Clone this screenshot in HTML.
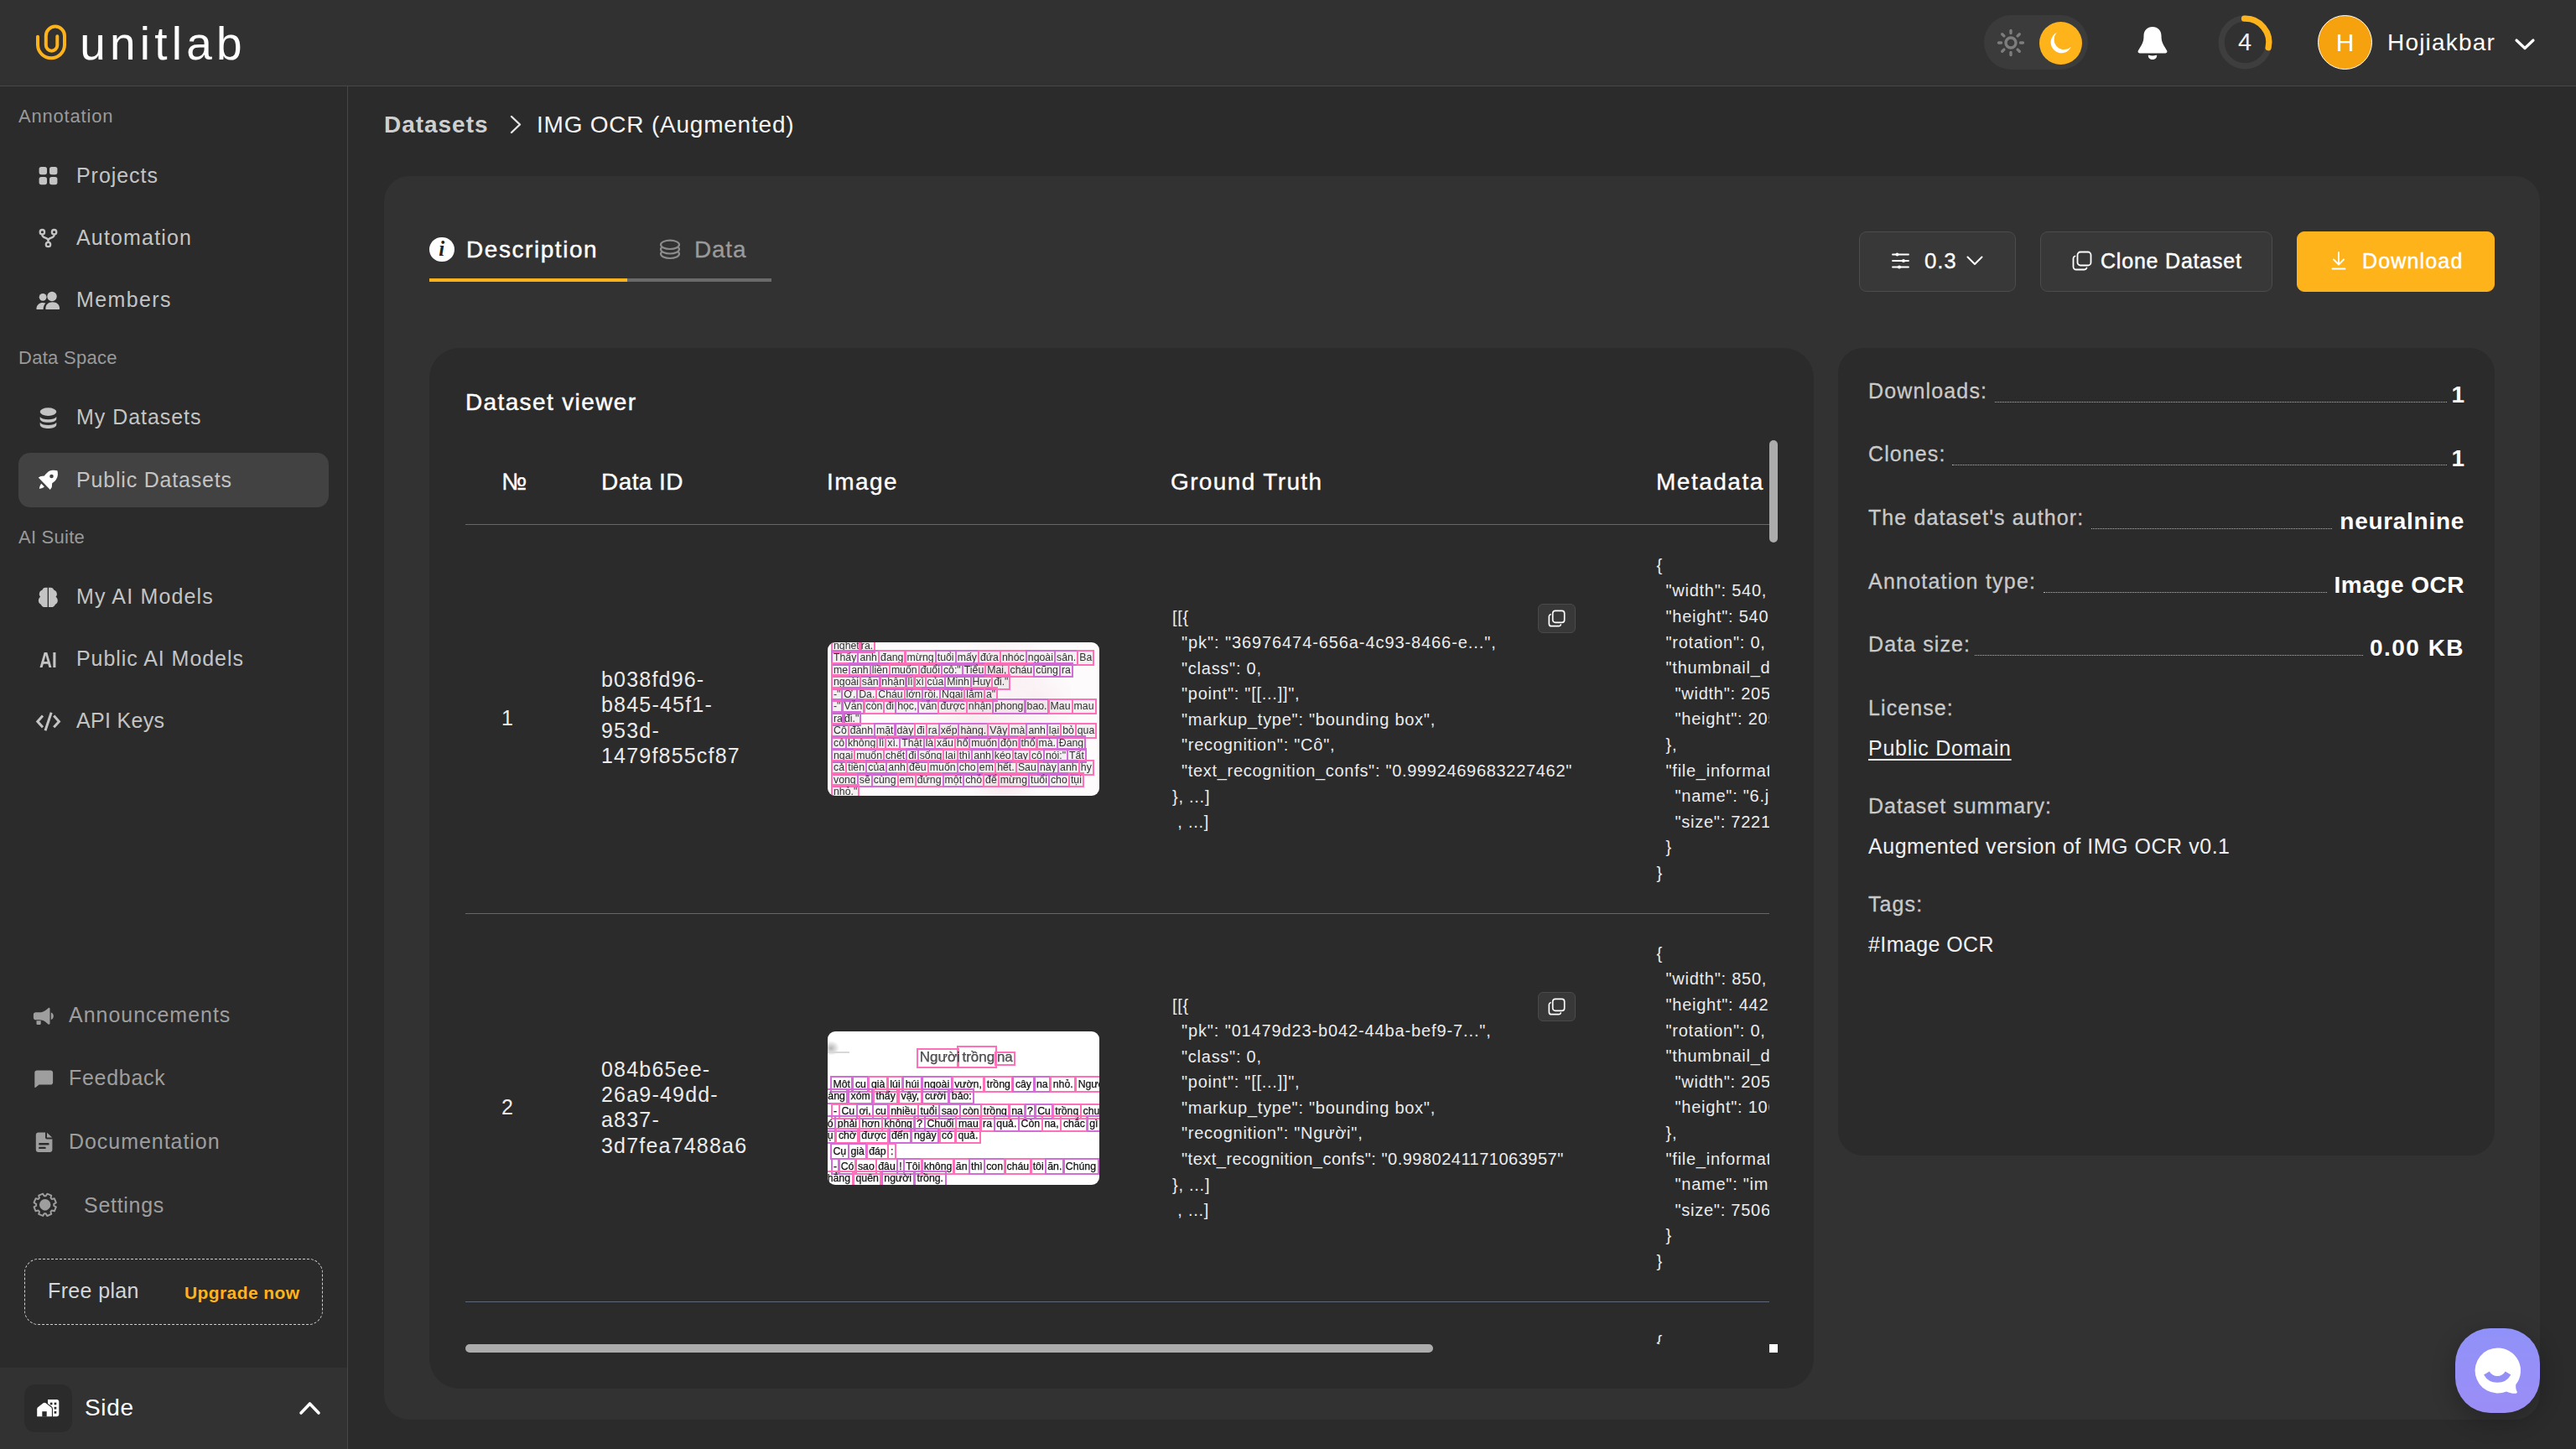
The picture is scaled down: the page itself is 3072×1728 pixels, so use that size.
<!DOCTYPE html>
<html lang="en">
<head>
<meta charset="utf-8">
<title>Unitlab – IMG OCR (Augmented)</title>
<style>
*{box-sizing:border-box;margin:0;padding:0}
html,body{width:3072px;height:1728px;overflow:hidden;background:#2b2b2b}
body{font-family:"Liberation Sans",sans-serif;color:#fff;position:relative;-webkit-font-smoothing:antialiased}
.abs{position:absolute}
.t{position:absolute;white-space:pre;line-height:1}
.md{-webkit-text-stroke:.45px currentColor}
.md2{-webkit-text-stroke:.3px currentColor}
svg{display:block;position:absolute;overflow:visible}

/* header */
#hdr{position:absolute;left:0;top:0;width:3072px;height:103px;background:#313131;border-bottom:1px solid #474747}
#logo-t{left:95.300px;top:25px;font-size:55px;letter-spacing:5.200px;color:#fff}
#pill{position:absolute;left:2366px;top:18px;width:124px;height:65px;border-radius:33px;background:#3b3b3b}
#moon{position:absolute;left:2432px;top:25.500px;width:51px;height:51px;border-radius:50%;background:#ffb31a}
#avatar{position:absolute;left:2764px;top:18px;width:65px;height:65px;border-radius:50%;background:#f6a10e;border:1px solid #fff}
#av-h{left:2764px;width:65px;text-align:center;top:36px;font-size:30px;color:#fff}
#uname{left:2847px;top:37px;font-size:28px;letter-spacing:1.2px;color:#fff}
#n4{left:2647px;width:60px;text-align:center;top:36px;font-size:29px;color:#f2f2f2}

/* sidebar */
#side{position:absolute;left:0;top:103px;width:415px;height:1625px;background:#2b2b2b;border-right:1px solid #474747}
.lbl{font-size:22px;color:#9a9a9a;left:22px}
.it{font-size:25px;color:#c4c4c4;left:91px}
.it2{font-size:25px;color:#9e9e9e;left:82px}
#active{position:absolute;left:22px;top:540px;width:370px;height:65px;border-radius:14px;background:#424242}
#plan{position:absolute;left:29px;top:1501px;width:356px;height:79px;border:1.5px dashed #cfcfcf;border-radius:17px}
#sbot{position:absolute;left:0;top:1631px;width:414px;height:97px;background:#323232}
#sbox{position:absolute;left:29px;top:1651px;width:57px;height:57px;border-radius:13px;background:#2b2b2b}
</style>
</head>
<body>

<!-- ================= HEADER ================= -->
<div id="hdr"></div>
<svg style="left:40px;top:27px" width="44" height="48" viewBox="40 27 44 48" fill="none" stroke="#ffb31a" stroke-width="4" stroke-linecap="round">
  <path d="M45 43.700V53.300a16 16 0 0 0 32 0V42.700a11.100 11.100 0 0 0-22.200 0V53.900a6.750 6.750 0 0 0 13.500 0V43.200"/>
</svg>
<div class="t" id="logo-t">unitlab</div>

<div id="pill"></div>
<svg style="left:2382px;top:35px" width="32" height="32" viewBox="-16 -16 32 32" fill="none" stroke="#7d7d7d" stroke-width="3.400" stroke-linecap="round">
  <circle r="6"/>
  <path d="M0-11.5V-14.5M0 11.5V14.5M-11.5 0H-14.5M11.5 0H14.5M-8.1-8.1L-10.3-10.3M8.1 8.1L10.3 10.3M8.1-8.1L10.3-10.3M-8.1 8.1L-10.3 10.3"/>
</svg>
<div id="moon"></div>
<svg style="left:2444px;top:38px" width="28" height="28" viewBox="0 0 28 28">
  <path d="M9 .8A12.800 12.800 0 1 0 26.100 17.500A11.500 11.500 0 0 1 9 .8Z" fill="#fff"/>
</svg>
<!-- bell -->
<svg style="left:2548px;top:31px" width="38" height="41" viewBox="0 0 38 41" fill="#fff">
  <path d="M19 1C12.800 1 8.500 5.300 8.500 11.500C8.500 15.500 8 19 6 22.500L1.800 29.600C1.100 30.900 2 32.400 3.500 32.400H34.500C36 32.400 36.900 30.900 36.200 29.600L32 22.500C30 19 29.500 15.500 29.500 11.500C29.500 5.300 25.200 1 19 1Z"/>
  <path d="M13.800 35.300C13.800 34.900 14.200 34.700 14.600 34.800C17.500 35.600 20.500 35.600 23.400 34.800C23.800 34.700 24.200 34.900 24.200 35.300C24.200 38 21.900 40.100 19 40.100C16.100 40.100 13.800 38 13.800 35.300Z"/>
</svg>
<!-- progress ring -->
<svg style="left:2645px;top:18px" width="65" height="65" viewBox="-32.500 -32.500 65 65" fill="none" stroke-width="7.300">
  <circle r="28.300" stroke="#3e3e3e"/>
  <path d="M-1 -28.300A28.300 28.300 0 0 1 27.600 6.300" stroke="#ffb31a" stroke-linecap="round"/>
</svg>
<div class="t" id="n4">4</div>
<div id="avatar"></div>
<div class="t" id="av-h">H</div>
<div class="t" id="uname">Hojiakbar</div>
<svg style="left:2999px;top:46px" width="24" height="14" viewBox="0 0 24 14" fill="none" stroke="#fff" stroke-width="3.200" stroke-linecap="round" stroke-linejoin="round"><path d="M2 2L12 11.500L22 2"/></svg>

<!-- ================= SIDEBAR ================= -->
<div id="side"></div>
<div class="t lbl" style="top:128px;letter-spacing:.8px">Annotation</div>
<div class="t it" style="top:197px;letter-spacing:.94px">Projects</div>
<div class="t it" style="top:271px;letter-spacing:1.17px">Automation</div>
<div class="t it" style="top:345px;letter-spacing:1.37px">Members</div>
<div class="t lbl" style="top:416px;letter-spacing:.28px">Data Space</div>
<div class="t it" style="top:485px;letter-spacing:.96px">My Datasets</div>
<div id="active"></div>
<div class="t it" style="top:560px;letter-spacing:.81px">Public Datasets</div>
<div class="t lbl" style="top:630px;letter-spacing:.24px">AI Suite</div>
<div class="t it" style="top:699px;letter-spacing:1.16px">My AI Models</div>
<div class="t it" style="top:773px;letter-spacing:.94px">Public AI Models</div>
<div class="t it" style="top:847px;letter-spacing:.31px">API Keys</div>

<div class="t it2" style="top:1198px;letter-spacing:.97px">Announcements</div>
<div class="t it2" style="top:1273px;letter-spacing:.71px">Feedback</div>
<div class="t it2" style="top:1349px;letter-spacing:.95px">Documentation</div>
<div class="t it2" style="top:1425px;left:100px;letter-spacing:.72px">Settings</div>

<div id="plan"></div>
<div class="t" style="left:57px;top:1527px;font-size:25px;letter-spacing:.36px;color:#d6d6d6">Free plan</div>
<div class="t" style="left:220px;top:1531px;font-size:21px;font-weight:700;letter-spacing:.4px;color:#ffb31a">Upgrade now</div>
<div id="sbot"></div>
<div id="sbox"></div>
<div class="t" style="left:101px;top:1665px;font-size:28px;letter-spacing:.65px;color:#fff">Side</div>
<svg style="left:356px;top:1670px" width="27" height="18" viewBox="0 0 27 18" fill="none" stroke="#fff" stroke-width="3.600" stroke-linecap="round" stroke-linejoin="round"><path d="M3 15L13.500 4L24 15"/></svg>


<!-- sidebar icons -->
<svg style="left:0;top:0" width="415" height="1728" viewBox="0 0 415 1728">
 <g fill="#c4c4c4">
  <!-- projects -->
  <rect x="46.6" y="198.9" width="9.4" height="9.3" rx="2.6"/><rect x="59" y="198.9" width="9.4" height="9.3" rx="2.6"/>
  <rect x="46.6" y="210.9" width="9.4" height="9.3" rx="2.6"/><rect x="59" y="210.9" width="9.4" height="9.3" rx="2.6"/>
  <!-- members -->
  <circle cx="51.1" cy="354.3" r="4.4"/><circle cx="62" cy="353.5" r="5.7"/>
  <path d="M55.300 369c-.6 0-1-.5-1-1.100.3-4.900 3.600-7.600 8.400-7.600s8.100 2.700 8.400 7.600c0 .6-.4 1.100-1 1.100Z"/>
  <path d="M44.300 369c-.6 0-1-.5-.9-1.100.4-4.300 3.400-7 7.800-7 1.200 0 2.300.2 3.200.6-1.800 1.700-2.700 4.200-2.800 7.500Z"/>
  <!-- my datasets -->
  <ellipse cx="57.5" cy="491.1" rx="9.8" ry="4.8"/>
  <path d="M47.700 497c1.500 2.200 5.200 3.300 9.800 3.300s8.300-1.100 9.800-3.300v2.400c0 2.600-4.400 4.400-9.800 4.400s-9.800-1.800-9.800-4.400Z"/>
  <path d="M47.700 503.700c1.500 2.200 5.200 3.300 9.800 3.300s8.300-1.100 9.800-3.300v2.900c0 2.600-4.400 4.400-9.800 4.400s-9.800-1.800-9.800-4.400Z"/>
  <!-- brain -->
  <path d="M56.70 700.80H54.20C52.30 700.80 50.90 702 50.50 703.60C48.40 704.20 46.80 706.20 46.80 708.60C46.80 709.80 47.30 710.90 48.20 711.80C46.80 712.80 45.90 714.40 45.90 716.20C45.90 718.20 47 719.90 48.70 720.70C49.40 722.70 51.40 724.10 53.60 724.10H56.70Z"/>
  <path d="M58.00 700.80 H60.50 C62.40 700.80 63.80 702.00 64.20 703.60 C66.30 704.20 67.90 706.20 67.90 708.60 C67.90 709.80 67.40 710.90 66.50 711.80 C67.90 712.80 68.80 714.40 68.80 716.20 C68.80 718.20 67.70 719.90 66.00 720.70 C65.30 722.70 63.30 724.10 61.10 724.10 H58.00 Z"/>
 </g>
 <!-- automation -->
 <g fill="none" stroke="#c4c4c4" stroke-width="2.3">
  <circle cx="50.4" cy="276.7" r="2.7"/><circle cx="64.6" cy="276.7" r="2.7"/><circle cx="57.5" cy="291.5" r="2.7"/>
  <path d="M50.400 279.500v.8c0 4.200 7.100 2.600 7.100 6.600v2M64.600 279.500v.8c0 4.200-7.100 2.600-7.100 6.6"/>
 </g>
 <!-- rocket (active, white) -->
 <g fill="#fff">
  <path d="M57.900 562.200C61 560.600 65.500 560.500 68.400 561.300C69.300 564.500 69.200 568.500 67.100 571.500C65.800 573.500 64 575 62.200 576.300L61.800 581L59.800 584L45.800 569.400L48.500 567.900L52.900 567.500C54.300 565.600 56 563.600 57.900 562.200Z"/>
  <path d="M49.200 576.800L52.900 580.600C51 582 48.800 582.800 46.900 582.900C47 580.800 47.900 578.500 49.200 576.800Z"/>
  <circle cx="61.500" cy="568" r="2.300" fill="#424242"/>
 </g>
 <!-- api keys -->
 <g fill="none" stroke="#c4c4c4" stroke-width="3" stroke-linejoin="miter">
  <path d="M51 853.500L44.800 860.400L51 867.300M64.200 853.500L70.400 860.400L64.200 867.300M61.200 849.800L54 871.2"/>
 </g>
 <g fill="#9e9e9e">
  <!-- announcements -->
  <path d="M58.300 1201.800c.7 0 1.200.5 1.200 1.200v17.500c0 .7-.5 1.200-1.200 1.200-.3 0-.6-.1-.8-.3l-2.300-2c-2.300-2-5.200-3.100-8.300-3.100h-4.400c-1.400 0-2.600-1.200-2.600-2.600v-3.800c0-1.400 1.200-2.600 2.600-2.600h4.400c3.100 0 6-1.100 8.300-3.100l2.300-2c.2-.2.500-.4.800-.4Z"/>
  <path d="M43.500 1217.200h5.200v3.600c0 .7-.6 1.300-1.300 1.300h-2.600c-.7 0-1.300-.6-1.300-1.300Z"/>
  <path d="M60.800 1207.600c1.800.4 3 2.100 3 4.200s-1.200 3.800-3 4.200Z"/>
  <!-- feedback -->
  <path d="M43.900 1276.600h16.600c1.400 0 2.600 1.200 2.600 2.600v11.700c0 1.400-1.200 2.600-2.600 2.600H46.600l-4.300 3.500c-.4.300-1 0-1-.5v-17.300c0-1.400 1.200-2.600 2.600-2.600Z"/>
  <!-- documentation -->
  <path d="M45.800 1350.500h8.200v6c0 1.100.9 2 2 2h6.400v12.500c0 1.700-1.300 3-3 3H45.800c-1.700 0-3-1.300-3-3v-17.500c0-1.700 1.300-3 3-3Z"/>
  <path d="M56 1350.700l6.200 5.800H56Z"/>
 </g>
 <g fill="none" stroke="#2b2b2b" stroke-width="2.4" stroke-linecap="round"><path d="M47.300 1364.300H57.500M47.300 1368.900H53.5"/></g>
 <!-- settings -->
 <g transform="translate(53.700 1436.800) rotate(22.500)">
  <path d="M10.130 -3.130 L13.130 -2.660 L13.130 2.660 L10.130 3.130 L9.380 4.950 L11.170 7.400 L7.400 11.170 L4.950 9.380 L3.130 10.130 L2.660 13.130 L-2.660 13.130 L-3.130 10.130 L-4.950 9.380 L-7.400 11.170 L-11.170 7.400 L-9.380 4.950 L-10.130 3.130 L-13.130 2.660 L-13.130 -2.660 L-10.130 -3.130 L-9.380 -4.950 L-11.170 -7.400 L-7.400 -11.170 L-4.950 -9.380 L-3.130 -10.130 L-2.660 -13.130 L2.660 -13.130 L3.130 -10.130 L4.950 -9.380 L7.400 -11.170 L11.170 -7.400 L9.380 -4.950Z" fill="none" stroke="#9e9e9e" stroke-width="2" stroke-linejoin="round"/>
  <circle r="6.7" fill="#9e9e9e"/>
 </g>
 <!-- side: house + building -->
 <g fill="#fff">
  <path d="M57 1669h10.800c1.400 0 2.500 1.100 2.500 2.500v15.300c0 1.400-1.100 2.500-2.500 2.500H57Z"/>
  <path d="M44.200 1689.300v-9.100c0-.8.400-1.500 1-2l6.300-4.900c.9-.7 2.200-.7 3.100 0l6.300 4.900c.6.500 1 1.200 1 2v9.100Z" stroke="#2b2b2b" stroke-width="2.2" paint-order="stroke"/>
 </g>
 <g fill="#2b2b2b">
  <rect x="50.3" y="1683.2" width="5.4" height="6.3"/>
  <rect x="64.6" y="1672.6" width="2.7" height="2.7"/><rect x="64.6" y="1677.8" width="2.7" height="2.7"/><rect x="64.6" y="1683" width="2.7" height="2.7"/>
  <rect x="59.8" y="1672.6" width="2.7" height="2.7"/>
 </g>
</svg>
<div class="t" style="left:46.600px;top:774px;font-size:26px;font-weight:700;color:#c4c4c4;transform:scaleX(.8);transform-origin:0 0">AI</div>



<!-- ================= MAIN ================= -->
<style>
#card{position:absolute;left:458px;top:210px;width:2571px;height:1483px;border-radius:30px;background:#323232}
#viewer{position:absolute;left:512px;top:415px;width:1651px;height:1241px;border-radius:36px;background:#2b2b2b}
#info{position:absolute;left:2192px;top:415px;width:783px;height:963px;border-radius:30px;background:#2b2b2b}
.btn{position:absolute;top:276px;height:72px;border-radius:9px;background:#383838;border:1px solid #4c4c4c}
.th{font-size:28px;color:#fff;top:561px;-webkit-text-stroke:.35px #fff}
.hl{position:absolute;left:555px;width:1555px;height:1px;background:#5f6878}
.did{position:absolute;left:717px;font-size:25px;line-height:30.400px;color:#ececec;white-space:pre;letter-spacing:1.200px}
.js{position:absolute;font-size:20px;line-height:30.600px;color:#ececec;white-space:pre;letter-spacing:.74px}
.js i{display:inline-block;width:11px}
.num{font-size:25px;color:#ececec;left:598px}
.cp{position:absolute;left:1834px;width:45px;height:35px;border-radius:6px;background:#383838;border:1px solid #4a4a4a}
.il{font-size:25px;color:#c9c9c9;left:2228px;-webkit-text-stroke:.3px #c9c9c9}
.iv{font-size:28px;font-weight:700;color:#fff;right:133px}
.ib{font-size:25px;color:#f0f0f0;left:2228px}
.dots{position:absolute;height:0;border-top:1px dotted #b4b4b4}
.thumb{position:absolute;left:987px;width:324px;height:183px;border-radius:9px;background:#fdfbfc;overflow:hidden;color:#303030}
</style>
<div id="card"></div>

<!-- breadcrumb -->
<div class="t" style="left:458px;top:135px;font-size:28px;font-weight:700;letter-spacing:.97px;color:#cfcfcf">Datasets</div>
<svg style="left:608px;top:137px" width="14" height="23" viewBox="0 0 14 23" fill="none" stroke="#e6e6e6" stroke-width="2.400" stroke-linecap="round" stroke-linejoin="round"><path d="M2 2L12 11.500L2 21"/></svg>
<div class="t" style="left:640px;top:135px;font-size:28px;letter-spacing:.78px;color:#f4f4f4">IMG OCR (Augmented)</div>

<!-- tabs -->
<div class="abs" style="left:512px;top:282.500px;width:29.500px;height:29.500px;border-radius:50%;background:#fff"></div>
<div class="t" style="left:512px;width:29.500px;text-align:center;top:284px;font-family:'Liberation Serif',serif;font-style:italic;font-weight:700;font-size:25px;color:#222">i</div>
<div class="t md" style="left:556px;top:284px;font-size:28px;letter-spacing:1.560px;color:#fff">Description</div>
<div class="abs" style="left:512px;top:332px;width:236px;height:4px;background:#ffb31a"></div>
<div class="abs" style="left:748px;top:332px;width:172px;height:4px;background:#6a6a6a"></div>
<svg style="left:786px;top:285px" width="26" height="25" viewBox="0 0 26 25" fill="#323232" stroke="#8c8c8c" stroke-width="2.200">
  <ellipse cx="13" cy="17.800" rx="11" ry="5.200"/><ellipse cx="13" cy="12.300" rx="11" ry="5.200"/><ellipse cx="13" cy="6.800" rx="11" ry="5.200"/>
</svg>
<div class="t md2" style="left:828px;top:284px;font-size:28px;letter-spacing:.78px;color:#9a9a9a">Data</div>

<!-- buttons -->
<div class="btn" style="left:2217px;width:187px"></div>
<svg style="left:2256px;top:300px" width="21" height="22" viewBox="0 0 21 22" fill="none" stroke="#fff" stroke-width="1.800" stroke-linecap="round">
  <path d="M1 3.500H20M1 11H20M1 18.500H20"/>
  <circle cx="6.500" cy="3.500" r="2" fill="#fff" stroke="none"/><circle cx="14" cy="11" r="2" fill="#fff" stroke="none"/><circle cx="9" cy="18.500" r="2" fill="#fff" stroke="none"/>
</svg>
<div class="t md2" style="left:2295px;top:298px;font-size:26px;letter-spacing:.8px;color:#fff">0.3</div>
<svg style="left:2345px;top:305px" width="20" height="12" viewBox="0 0 20 12" fill="none" stroke="#fff" stroke-width="2" stroke-linecap="round" stroke-linejoin="round"><path d="M1.500 1.500L10 10L18.500 1.500"/></svg>

<div class="btn" style="left:2433px;width:277px"></div>
<svg style="left:2471px;top:299px" width="24" height="24" viewBox="0 0 24 24" fill="none" stroke="#fff" stroke-width="1.800" stroke-linejoin="round">
  <rect x="6.500" y="1.500" width="16" height="16" rx="3.500"/>
  <path d="M3.500 6.500c-1.200.4-2 1.500-2 2.800v9.700c0 2 1.600 3.500 3.500 3.500h9.700c1.300 0 2.400-.8 2.800-2" stroke-linecap="round"/>
</svg>
<div class="t md" style="left:2505px;top:299px;font-size:25px;letter-spacing:.8px;color:#fff">Clone Dataset</div>

<div class="btn" style="left:2739px;width:236px;background:#ffb31a;border-color:#ffb31a"></div>
<svg style="left:2780px;top:300px" width="18" height="22" viewBox="0 0 18 22" fill="none" stroke="#fff" stroke-width="1.800" stroke-linecap="round" stroke-linejoin="round">
  <path d="M9 1V15.500M3 9.500L9 15.500L15 9.500M1.500 20.500H16.500"/>
</svg>
<div class="t md" style="left:2817px;top:299px;font-size:25px;letter-spacing:1.160px;color:#fff">Download</div>

<!-- dataset viewer -->
<div id="viewer"></div>
<div class="t md" style="left:555px;top:466px;font-size:28px;letter-spacing:1.370px;color:#fff">Dataset viewer</div>

<div class="t th" style="left:598px;letter-spacing:1px">№</div>
<div class="t th" style="left:717px;letter-spacing:.43px">Data ID</div>
<div class="t th" style="left:986px;letter-spacing:1.420px">Image</div>
<div class="t th" style="left:1396px;letter-spacing:1.370px">Ground Truth</div>
<div class="t th" style="left:1975px;letter-spacing:1.510px">Metadata</div>
<div class="hl" style="top:625px"></div>
<div class="hl" style="top:1089px"></div>
<div class="hl" style="top:1552px"></div>

<!-- row 1 -->
<div class="t num" style="top:844px">1</div>
<div class="did" style="top:795px">b038fd96-
b845-45f1-
953d-
1479f855cf87</div>
<style>
.ln{position:absolute;left:6px;display:flex;justify-content:space-between;font-size:12.300px;line-height:14.600px;white-space:pre}
.ln span{padding:0 1px;background:rgba(0,0,0,.045)}
.thumb>*{filter:blur(.4px)}
.t2 .ln span{padding:.5px 1.500px;-webkit-text-stroke:.25px #111;background:none}
</style>
<div class="thumb" style="top:766px">
<div class="abs" style="left:60px;top:0;width:230px;height:183px;background:radial-gradient(ellipse 60px 40px at 150px 30px,rgba(235,175,190,.16),transparent),radial-gradient(ellipse 70px 50px at 120px 95px,rgba(235,170,188,.2),transparent),radial-gradient(ellipse 50px 40px at 190px 70px,rgba(235,175,190,.16),transparent),radial-gradient(ellipse 40px 30px at 150px 170px,rgba(238,170,185,.22),transparent)"></div>
<div class="ln" style="top:-3.5px;width:49px"><span style="outline:2.200px solid #ff70ba">nghẹt</span><span style="outline:2.200px solid #ff70ba">ra.</span></div>
<div class="ln" style="top:11.1px;width:310.5px"><span style="outline:2.200px solid #d46cd8">Thấy</span><span style="outline:2.200px solid #d46cd8">anh</span><span style="outline:2.200px solid #ff70ba">đang</span><span style="outline:2.200px solid #ff70ba">mừng</span><span style="outline:2.200px solid #d46cd8">tuổi</span><span style="outline:2.200px solid #d46cd8">mấy</span><span style="outline:2.200px solid #ff70ba">đứa</span><span style="outline:2.200px solid #ff70ba">nhóc</span><span style="outline:2.200px solid #d46cd8">ngoài</span><span style="outline:2.200px solid #d46cd8">sân.</span><span style="outline:2.200px solid #ff70ba">Ba</span></div>
<div class="ln" style="top:25.6px;width:285px"><span style="outline:2.200px solid #ff70ba">mẹ</span><span style="outline:2.200px solid #d46cd8">anh</span><span style="outline:2.200px solid #d46cd8">liền</span><span style="outline:2.200px solid #ff70ba">muốn</span><span style="outline:2.200px solid #ff70ba">đuổi</span><span style="outline:2.200px solid #d46cd8">cô:"</span><span style="outline:2.200px solid #d46cd8">Tiểu</span><span style="outline:2.200px solid #ff70ba">Mai,</span><span style="outline:2.200px solid #ff70ba">cháu</span><span style="outline:2.200px solid #d46cd8">cũng</span><span style="outline:2.200px solid #d46cd8">ra</span></div>
<div class="ln" style="top:40.2px;width:210.5px"><span style="outline:2.200px solid #ff70ba">ngoài</span><span style="outline:2.200px solid #ff70ba">sân</span><span style="outline:2.200px solid #d46cd8">nhận</span><span style="outline:2.200px solid #d46cd8">lì</span><span style="outline:2.200px solid #ff70ba">xì</span><span style="outline:2.200px solid #ff70ba">của</span><span style="outline:2.200px solid #d46cd8">Minh</span><span style="outline:2.200px solid #d46cd8">Huy</span><span style="outline:2.200px solid #ff70ba">đi."</span></div>
<div class="ln" style="top:54.7px;width:195.3px"><span style="outline:2.200px solid #ff70ba">-"</span><span style="outline:2.200px solid #d46cd8">Ơ.</span><span style="outline:2.200px solid #d46cd8">Dạ.</span><span style="outline:2.200px solid #ff70ba">Cháu</span><span style="outline:2.200px solid #ff70ba">lớn</span><span style="outline:2.200px solid #d46cd8">rồi.</span><span style="outline:2.200px solid #d46cd8">Ngại</span><span style="outline:2.200px solid #ff70ba">lắm</span><span style="outline:2.200px solid #ff70ba">ạ"</span></div>
<div class="ln" style="top:69.2px;width:312.6px"><span style="outline:2.200px solid #d46cd8">-"</span><span style="outline:2.200px solid #d46cd8">Vẫn</span><span style="outline:2.200px solid #ff70ba">còn</span><span style="outline:2.200px solid #ff70ba">đi</span><span style="outline:2.200px solid #d46cd8">học,</span><span style="outline:2.200px solid #d46cd8">vẫn</span><span style="outline:2.200px solid #ff70ba">được</span><span style="outline:2.200px solid #ff70ba">nhận</span><span style="outline:2.200px solid #d46cd8">phong</span><span style="outline:2.200px solid #d46cd8">bao.</span><span style="outline:2.200px solid #ff70ba">Mau</span><span style="outline:2.200px solid #ff70ba">mau</span></div>
<div class="ln" style="top:83.8px;width:30.3px"><span style="outline:2.200px solid #d46cd8">ra</span><span style="outline:2.200px solid #d46cd8">đi."</span></div>
<div class="ln" style="top:98.4px;width:313.3px"><span style="outline:2.200px solid #ff70ba">Cô</span><span style="outline:2.200px solid #ff70ba">đành</span><span style="outline:2.200px solid #d46cd8">mặt</span><span style="outline:2.200px solid #d46cd8">dày</span><span style="outline:2.200px solid #ff70ba">đi</span><span style="outline:2.200px solid #ff70ba">ra</span><span style="outline:2.200px solid #d46cd8">xếp</span><span style="outline:2.200px solid #d46cd8">hàng.</span><span style="outline:2.200px solid #ff70ba">Vậy</span><span style="outline:2.200px solid #ff70ba">mà</span><span style="outline:2.200px solid #d46cd8">anh</span><span style="outline:2.200px solid #d46cd8">lại</span><span style="outline:2.200px solid #ff70ba">bỏ</span><span style="outline:2.200px solid #ff70ba">qua</span></div>
<div class="ln" style="top:112.9px;width:300.2px"><span style="outline:2.200px solid #d46cd8">cô</span><span style="outline:2.200px solid #d46cd8">không</span><span style="outline:2.200px solid #ff70ba">lì</span><span style="outline:2.200px solid #ff70ba">xì.</span><span style="outline:2.200px solid #d46cd8">Thật</span><span style="outline:2.200px solid #d46cd8">là</span><span style="outline:2.200px solid #ff70ba">xấu</span><span style="outline:2.200px solid #ff70ba">hổ</span><span style="outline:2.200px solid #d46cd8">muốn</span><span style="outline:2.200px solid #d46cd8">độn</span><span style="outline:2.200px solid #ff70ba">thổ</span><span style="outline:2.200px solid #ff70ba">mà.</span><span style="outline:2.200px solid #d46cd8">Đang</span></div>
<div class="ln" style="top:127.5px;width:301px"><span style="outline:2.200px solid #d46cd8">ngại</span><span style="outline:2.200px solid #ff70ba">muốn</span><span style="outline:2.200px solid #ff70ba">chết</span><span style="outline:2.200px solid #d46cd8">đi</span><span style="outline:2.200px solid #d46cd8">sống</span><span style="outline:2.200px solid #ff70ba">lại</span><span style="outline:2.200px solid #ff70ba">thì</span><span style="outline:2.200px solid #d46cd8">anh</span><span style="outline:2.200px solid #d46cd8">kéo</span><span style="outline:2.200px solid #ff70ba">tay</span><span style="outline:2.200px solid #ff70ba">cô</span><span style="outline:2.200px solid #d46cd8">nói:"</span><span style="outline:2.200px solid #d46cd8">Tất</span></div>
<div class="ln" style="top:142.0px;width:309.9px"><span style="outline:2.200px solid #ff70ba">cả</span><span style="outline:2.200px solid #ff70ba">tiền</span><span style="outline:2.200px solid #d46cd8">của</span><span style="outline:2.200px solid #d46cd8">anh</span><span style="outline:2.200px solid #ff70ba">đều</span><span style="outline:2.200px solid #ff70ba">muốn</span><span style="outline:2.200px solid #d46cd8">cho</span><span style="outline:2.200px solid #d46cd8">em</span><span style="outline:2.200px solid #ff70ba">hết.</span><span style="outline:2.200px solid #ff70ba">Sau</span><span style="outline:2.200px solid #d46cd8">này</span><span style="outline:2.200px solid #d46cd8">anh</span><span style="outline:2.200px solid #ff70ba">hy</span></div>
<div class="ln" style="top:156.6px;width:298px"><span style="outline:2.200px solid #ff70ba">vọng</span><span style="outline:2.200px solid #d46cd8">sẽ</span><span style="outline:2.200px solid #d46cd8">cùng</span><span style="outline:2.200px solid #ff70ba">em</span><span style="outline:2.200px solid #ff70ba">đứng</span><span style="outline:2.200px solid #d46cd8">một</span><span style="outline:2.200px solid #d46cd8">chỗ</span><span style="outline:2.200px solid #ff70ba">để</span><span style="outline:2.200px solid #ff70ba">mừng</span><span style="outline:2.200px solid #d46cd8">tuổi</span><span style="outline:2.200px solid #d46cd8">cho</span><span style="outline:2.200px solid #ff70ba">tụi</span></div>
<div class="ln" style="top:171.1px;width:26px"><span style="outline:2.200px solid #ff70ba">nhỏ."</span></div>
</div>
<div class="js" style="left:1398px;top:720.500px">[[{
<i></i><span style="letter-spacing:.91px">"pk": "36976474-656a-4c93-8466-e...",</span>
<i></i>"class": 0,
<i></i>"point": "[[...]]",
<i></i>"markup_type": "bounding box",
<i></i>"recognition": "Cô",
<i></i><span style="letter-spacing:.69px">"text_recognition_confs": "0.9992469683227462"</span>
}, ...]
 , ...]</div>
<div class="cp" style="top:720px"></div>
<svg style="left:1846px;top:727px" width="21" height="21" viewBox="0 0 24 24" fill="none" stroke="#fff" stroke-width="1.900" stroke-linejoin="round">
  <rect x="6.500" y="1.500" width="16" height="16" rx="3.500"/>
  <path d="M3.500 6.500c-1.200.4-2 1.500-2 2.800v9.700c0 2 1.600 3.500 3.500 3.500h9.700c1.300 0 2.400-.8 2.800-2" stroke-linecap="round"/>
</svg>
<div class="abs" style="left:1965px;top:640px;width:145px;height:440px;overflow:hidden"><div class="js" style="left:10.500px;top:18.800px">{
<i></i>"width": 540,
<i></i>"height": 540,
<i></i>"rotation": 0,
<i></i>"thumbnail_data": {
<i></i><i></i>"width": 205,
<i></i><i></i>"height": 205,
<i></i>},
<i></i>"file_information": {
<i></i><i></i>"name": "6.jpg",
<i></i><i></i>"size": 72212,
<i></i>}
}</div></div>

<!-- row 2 -->
<div class="t num" style="top:1307.500px">2</div>
<div class="did" style="top:1259.500px">084b65ee-
26a9-49dd-
a837-
3d7fea7488a6</div>
<div class="thumb t2" style="top:1230px;background:#fff;color:#111">
<div class="abs" style="left:0;top:4px;width:26px;height:24px;background:radial-gradient(ellipse 10px 9px at 4px 16px,rgba(120,120,120,.55),transparent)"></div>
<div class="abs" style="left:0;top:24px;width:26px;height:1.500px;background:#d8d8d8"></div>
<div class="abs" style="left:107.700px;top:21.500px;width:47px;height:20.700px;outline:2.200px solid #ff70ba"></div><div class="abs" style="left:156px;top:19.300px;width:43.500px;height:22.900px;outline:2.200px solid #ff70ba"></div><div class="abs" style="left:200.900px;top:26.200px;width:21.400px;height:12.400px;outline:2.200px solid #ff70ba"></div><div class="ln" style="left:109.800px;top:19.500px;width:111px;font-size:17px;line-height:22px;color:#5a5a5a"><span style="padding:0">Người</span><span style="padding:0">trồng</span><span style="padding:0">na</span></div>
<div class="ln" style="left:4.9px;top:55.2px;width:330px"><span style="outline:2.200px solid #d46cd8">Một</span><span style="outline:2.200px solid #d46cd8">cụ</span><span style="outline:2.200px solid #ff70ba">già</span><span style="outline:2.200px solid #ff70ba">lúi</span><span style="outline:2.200px solid #d46cd8">húi</span><span style="outline:2.200px solid #d46cd8">ngoài</span><span style="outline:2.200px solid #ff70ba">vườn,</span><span style="outline:2.200px solid #ff70ba">trồng</span><span style="outline:2.200px solid #d46cd8">cây</span><span style="outline:2.200px solid #d46cd8">na</span><span style="outline:2.200px solid #ff70ba">nhỏ.</span><span style="outline:2.200px solid #ff70ba">Người</span></div>
<div class="ln" style="left:-8px;top:69.9px;width:181.3px"><span style="outline:2.200px solid #d46cd8">hàng</span><span style="outline:2.200px solid #d46cd8">xóm</span><span style="outline:2.200px solid #ff70ba">thấy</span><span style="outline:2.200px solid #ff70ba">vậy,</span><span style="outline:2.200px solid #d46cd8">cười</span><span style="outline:2.200px solid #d46cd8">bảo:</span></div>
<div class="ln" style="left:5.6px;top:87.7px;width:330px"><span style="outline:2.200px solid #ff70ba">-</span><span style="outline:2.200px solid #ff70ba">Cụ</span><span style="outline:2.200px solid #d46cd8">ơi,</span><span style="outline:2.200px solid #d46cd8">cụ</span><span style="outline:2.200px solid #ff70ba">nhiều</span><span style="outline:2.200px solid #ff70ba">tuổi</span><span style="outline:2.200px solid #d46cd8">sao</span><span style="outline:2.200px solid #d46cd8">còn</span><span style="outline:2.200px solid #ff70ba">trồng</span><span style="outline:2.200px solid #ff70ba">na</span><span style="outline:2.200px solid #d46cd8">?</span><span style="outline:2.200px solid #d46cd8">Cụ</span><span style="outline:2.200px solid #ff70ba">trồng</span><span style="outline:2.200px solid #ff70ba">chuối</span></div>
<div class="ln" style="left:-8px;top:102.1px;width:332px"><span style="outline:2.200px solid #d46cd8">có</span><span style="outline:2.200px solid #d46cd8">phải</span><span style="outline:2.200px solid #ff70ba">hơn</span><span style="outline:2.200px solid #ff70ba">không</span><span style="outline:2.200px solid #d46cd8">?</span><span style="outline:2.200px solid #d46cd8">Chuối</span><span style="outline:2.200px solid #ff70ba">mau</span><span style="outline:2.200px solid #ff70ba">ra</span><span style="outline:2.200px solid #d46cd8">quả.</span><span style="outline:2.200px solid #d46cd8">Còn</span><span style="outline:2.200px solid #ff70ba">na,</span><span style="outline:2.200px solid #ff70ba">chắc</span><span style="outline:2.200px solid #d46cd8">gì</span></div>
<div class="ln" style="left:-8px;top:116.9px;width:188.9px"><span style="outline:2.200px solid #d46cd8">cụ</span><span style="outline:2.200px solid #ff70ba">chờ</span><span style="outline:2.200px solid #ff70ba">được</span><span style="outline:2.200px solid #d46cd8">đến</span><span style="outline:2.200px solid #d46cd8">ngày</span><span style="outline:2.200px solid #ff70ba">có</span><span style="outline:2.200px solid #ff70ba">quả.</span></div>
<div class="ln" style="left:4.9px;top:135.2px;width:75px"><span style="outline:2.200px solid #d46cd8">Cụ</span><span style="outline:2.200px solid #d46cd8">già</span><span style="outline:2.200px solid #ff70ba">đáp</span><span style="outline:2.200px solid #ff70ba">:</span></div>
<div class="ln" style="left:5.6px;top:153.2px;width:316px"><span style="outline:2.200px solid #d46cd8">-</span><span style="outline:2.200px solid #d46cd8">Có</span><span style="outline:2.200px solid #ff70ba">sao</span><span style="outline:2.200px solid #ff70ba">đâu</span><span style="outline:2.200px solid #d46cd8">!</span><span style="outline:2.200px solid #d46cd8">Tôi</span><span style="outline:2.200px solid #ff70ba">không</span><span style="outline:2.200px solid #ff70ba">ăn</span><span style="outline:2.200px solid #d46cd8">thì</span><span style="outline:2.200px solid #d46cd8">con</span><span style="outline:2.200px solid #ff70ba">cháu</span><span style="outline:2.200px solid #ff70ba">tôi</span><span style="outline:2.200px solid #d46cd8">ăn.</span><span style="outline:2.200px solid #d46cd8">Chúng</span></div>
<div class="ln" style="left:-8px;top:167.7px;width:147.5px"><span style="outline:2.200px solid #ff70ba">chẳng</span><span style="outline:2.200px solid #ff70ba">quên</span><span style="outline:2.200px solid #d46cd8">người</span><span style="outline:2.200px solid #d46cd8">trồng.</span></div>
</div>
<div class="js" style="left:1398px;top:1183.500px">[[{
<i></i><span style="letter-spacing:.87px">"pk": "01479d23-b042-44ba-bef9-7...",</span>
<i></i>"class": 0,
<i></i>"point": "[[...]]",
<i></i>"markup_type": "bounding box",
<i></i>"recognition": "Người",
<i></i><span style="letter-spacing:.5px">"text_recognition_confs": "0.9980241171063957"</span>
}, ...]
 , ...]</div>
<div class="cp" style="top:1183px"></div>
<svg style="left:1846px;top:1190px" width="21" height="21" viewBox="0 0 24 24" fill="none" stroke="#fff" stroke-width="1.900" stroke-linejoin="round">
  <rect x="6.500" y="1.500" width="16" height="16" rx="3.500"/>
  <path d="M3.500 6.500c-1.200.4-2 1.500-2 2.800v9.700c0 2 1.600 3.500 3.500 3.500h9.700c1.300 0 2.400-.8 2.800-2" stroke-linecap="round"/>
</svg>
<div class="abs" style="left:1965px;top:1103px;width:145px;height:440px;overflow:hidden"><div class="js" style="left:10.500px;top:18.800px">{
<i></i>"width": 850,
<i></i>"height": 442,
<i></i>"rotation": 0,
<i></i>"thumbnail_data": {
<i></i><i></i>"width": 205,
<i></i><i></i>"height": 106,
<i></i>},
<i></i>"file_information": {
<i></i><i></i>"name": "image_12.jpg",
<i></i><i></i>"size": 75060,
<i></i>}
}</div></div>
<!-- row 3 (clipped) -->
<div class="abs" style="left:1965px;top:1566px;width:145px;height:37px;overflow:hidden"><div class="js" style="left:10.500px;top:18.800px">{
<i></i>"width": 720,</div></div>

<!-- scrollbars -->
<div class="abs" style="left:2110px;top:525px;width:10px;height:122px;border-radius:5px;background:#acacac"></div>
<div class="abs" style="left:555px;top:1603px;width:1154px;height:10px;border-radius:5px;background:#acacac"></div>
<div class="abs" style="left:2110px;top:1603px;width:10px;height:10px;background:#fff"></div>

<!-- info panel -->
<div id="info"></div>
<div class="t il" style="top:453.800px;letter-spacing:1.150px">Downloads:</div>
<div class="t iv" style="top:457px">1</div>
<div class="dots" style="left:2379px;top:479px;width:539px"></div>
<div class="t il" style="top:529.400px;letter-spacing:1.100px">Clones:</div>
<div class="t iv" style="top:532.600px">1</div>
<div class="dots" style="left:2328px;top:554px;width:590px"></div>
<div class="t il" style="top:605px;letter-spacing:1.100px">The dataset's author:</div>
<div class="t iv" style="top:608.200px;letter-spacing:.71px">neuralnine</div>
<div class="dots" style="left:2494px;top:630px;width:287px"></div>
<div class="t il" style="top:680.600px;letter-spacing:1.220px">Annotation type:</div>
<div class="t iv" style="top:683.800px;letter-spacing:.51px">Image OCR</div>
<div class="dots" style="left:2437px;top:706px;width:338px"></div>
<div class="t il" style="top:756.200px;letter-spacing:1.100px">Data size:</div>
<div class="t iv" style="top:759.400px;letter-spacing:1.460px">0.00 KB</div>
<div class="dots" style="left:2355px;top:781px;width:463px"></div>
<div class="t il" style="top:832px;letter-spacing:1.100px">License:</div>
<div class="t ib" style="top:879.800px;letter-spacing:.73px;text-decoration:underline;text-decoration-thickness:2px;text-underline-offset:4px">Public Domain</div>
<div class="t il" style="top:948.800px;letter-spacing:1.010px">Dataset summary:</div>
<div class="t ib" style="top:996.700px;letter-spacing:.53px">Augmented version of IMG OCR v0.1</div>
<div class="t il" style="top:1065.800px;letter-spacing:1.100px">Tags:</div>
<div class="t ib" style="top:1114.200px;letter-spacing:.4px">#Image OCR</div>

<!-- chat widget -->
<div class="abs" style="left:2928px;top:1584px;width:101px;height:101px;border-radius:42px;background:linear-gradient(#9092f9,#9b8df6);box-shadow:0 8px 26px 4px rgba(0,0,0,.2)"></div>
<svg style="left:2948px;top:1605px" width="62" height="62" viewBox="0 0 62 62">
  <path d="M30.500 2.500a27 27 0 1 0 10.500 51.900c2.500 1.300 7.500 2.700 11.500 2.300 1.200-.1 1.600-1.200 1.100-2.100-1.400-2.500-1.700-6-1.300-8.500A27 27 0 0 0 30.500 2.500Z" fill="#fff"/>
  <path d="M17.400 32.500A14.750 14.750 0 0 0 43 32.500" fill="none" stroke="#9490f8" stroke-width="7.700"/>
</svg>


</body>
</html>
